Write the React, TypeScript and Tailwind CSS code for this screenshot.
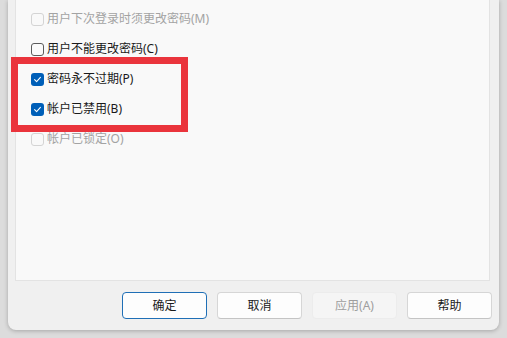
import React from "react";

const font = { fontFamily: '"Noto Sans", "Noto Sans CJK SC", sans-serif' };

type CB = { label: string; state: "checked" | "unchecked" | "disabled" };

const rows: CB[] = [
  { label: "用户下次登录时须更改密码(M)", state: "disabled" },
  { label: "用户不能更改密码(C)", state: "unchecked" },
  { label: "密码永不过期(P)", state: "checked" },
  { label: "帐户已禁用(B)", state: "checked" },
  { label: "帐户已锁定(O)", state: "disabled" },
];

function Box({ state }: { state: CB["state"] }) {
  if (state === "checked") {
    return (
      <div className="w-[13px] h-[13px] rounded-[3px] bg-[#005fb8] flex items-center justify-center">
        <svg width="9" height="9" viewBox="0 0 9 9">
          <path d="M1.6 4.7 L3.6 6.6 L7.4 2.4" fill="none" stroke="white" strokeWidth="1.1" strokeLinecap="round" strokeLinejoin="round" />
        </svg>
      </div>
    );
  }
  if (state === "disabled") {
    return <div className="w-[13px] h-[13px] rounded-[3px] border border-[#d4d4d4] bg-[#f9f9f9]" />;
  }
  return <div className="w-[13px] h-[13px] rounded-[3px] border border-[#5c5c5c] bg-[#fbfbfb]" />;
}

function Btn({ label, kind }: { label: string; kind: "default" | "normal" | "disabled" }) {
  const cls =
    kind === "default"
      ? "border-[#1f6fb6] bg-[#fdfdfd] text-[#1a1a1a]"
      : kind === "disabled"
      ? "border-[#ececec] bg-[#f5f5f5] text-[#9e9e9e]"
      : "border-[#d6d6d6] border-b-[#c4c4c4] bg-[#fdfdfd] text-[#1a1a1a]";
  return (
    <div className={`w-[85px] h-[27px] rounded-[4px] border flex items-center justify-center text-[12px] ${cls}`}>
      {label}
    </div>
  );
}

export default function App() {
  return (
    <div className="relative w-[507px] h-[338px] overflow-hidden bg-[#dcdcdc]" style={font}>
      <div className="ml-[8px] w-[491px] h-[330px] bg-[#f0f0f0] rounded-b-[8px] shadow-[0_1px_4px_rgba(0,0,0,0.25)] flex flex-col">
        <div className="ml-[7px] w-[475px] h-[281px] bg-[#f9f9f9] border-x border-b border-[#e3e3e3] pt-[4px] pl-[15px]">
          {rows.map((r) => (
            <div key={r.label} className="h-[30px] flex items-center gap-[3px]">
              <Box state={r.state} />
              <span className={`text-[12px] ${r.state === "disabled" ? "text-[#a3a3a3]" : "text-[#1a1a1a]"}`}>
                {r.label}
              </span>
            </div>
          ))}
        </div>
        <div className="mt-[11px] pl-[114px] flex gap-[10px]">
          <Btn label="确定" kind="default" />
          <Btn label="取消" kind="normal" />
          <Btn label="应用(A)" kind="disabled" />
          <Btn label="帮助" kind="normal" />
        </div>
      </div>
      <div className="absolute left-[11px] top-[57px] w-[177px] h-[75px] border-[7px] border-[#ea343c]" />
    </div>
  );
}
